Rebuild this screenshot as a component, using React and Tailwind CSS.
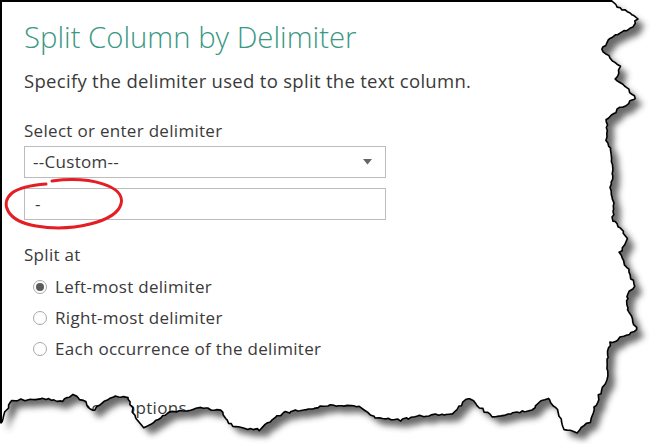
import React from 'react';

// key points of the torn edge, clockwise from the top right corner
const EDGE = [
  [612, 1], [620, 8], [637, 18], [633, 27], [610, 38], [602, 50], [610, 58], [620, 67],
  [615, 80], [625, 85], [636, 98], [618, 110], [607, 120], [607, 140], [612, 153],
  [613, 173], [610, 187], [613, 203], [613, 220], [628, 238], [620, 253], [628, 270],
  [635, 287], [627, 293], [628, 310], [637, 330], [610, 343], [607, 360], [608, 380],
  [600, 393], [590, 422], [577, 432], [565, 430], [557, 410], [548, 398], [540, 402],
  [533, 410], [513, 413], [493, 417], [480, 407], [468, 398], [460, 407], [453, 414],
  [420, 416], [400, 420], [373, 417], [360, 407], [333, 405], [300, 410], [283, 413],
  [267, 423], [260, 430], [233, 427], [220, 411], [200, 407], [187, 410], [167, 413],
  [153, 423], [143, 428], [137, 420], [127, 397], [113, 397], [107, 400], [93, 411],
  [83, 400], [73, 395], [60, 402], [43, 398], [33, 400], [12, 400], [5, 413], [1, 423],
];

// add small jagged steps between the key points
const jagged = () => {
  let seed = 7;
  const rnd = () => {
    seed = (seed * 9301 + 49297) % 233280;
    return seed / 233280 - 0.5;
  };
  const pts = [];
  for (let i = 0; i < EDGE.length - 1; i++) {
    const [x1, y1] = EDGE[i];
    const [x2, y2] = EDGE[i + 1];
    const steps = Math.max(1, Math.round(Math.hypot(x2 - x1, y2 - y1) / 3));
    for (let s = 0; s < steps; s++) {
      const t = s / steps;
      const j = i === 0 && s === 0 ? 0 : 1;
      pts.push([x1 + (x2 - x1) * t + rnd() * 2.2 * j, y1 + (y2 - y1) * t + rnd() * 2.2 * j]);
    }
  }
  pts.push(EDGE[EDGE.length - 1]);
  return pts.map(([x, y]) => `${x.toFixed(1)},${y.toFixed(1)}`).join(' L');
};

const edge = jagged();
const paper = `M1,1 L${edge} Z`;
const outside = `M612,0 L${edge} L0,444 L653,444 L653,0 Z`;

const TornEdge = () => (
  <svg className="absolute inset-0 pointer-events-none" width="653" height="444" viewBox="0 0 653 444">
    <defs>
      <filter id="blur" x="-10%" y="-10%" width="120%" height="120%">
        <feGaussianBlur stdDeviation="3.2" />
      </filter>
      <clipPath id="out">
        <path d={outside} />
      </clipPath>
    </defs>
    <path d={outside} fill="#fff" />
    <g clipPath="url(#out)">
      <path d={paper} fill="#444" opacity="0.8" filter="url(#blur)" transform="translate(7,7)" />
    </g>
    <path d={paper} fill="none" stroke="#000" strokeWidth="1.6" strokeLinejoin="round" />
    <path d="M0,1 L612,1 M1,0 L1,423" stroke="#000" strokeWidth="2" />
  </svg>
);

const Radio = ({ checked, label }) => (
  <label className="flex items-center gap-[8px] h-[31px]">
    <span className="w-[14px] h-[14px] rounded-full border border-[#a8a8a8] bg-white flex items-center justify-center">
      {checked && <span className="w-[8px] h-[8px] rounded-full bg-[#5a5a5a]" />}
    </span>
    <span>{label}</span>
  </label>
);

export default function App() {
  return (
    <div
      className="relative w-[653px] h-[444px] overflow-hidden bg-white text-[#3a3a3a]"
      style={{ fontFamily: '"Open Sans", "Noto Sans", sans-serif' }}
    >
      <div className="pl-6 pt-[19px]">
        <h1 className="text-[29.3px] leading-[36px] font-light text-[#3a9884]">
          Split Column by Delimiter
        </h1>
        <p className="mt-[14px] text-[18.5px] leading-[24px] tracking-[0.3px]">
          Specify the delimiter used to split the text column.
        </p>
        <p className="mt-[27px] text-[17px] leading-[22px] tracking-[0.3px]">Select or enter delimiter</p>
        <div className="mt-[4px] w-[362px] h-[32px] border border-[#bcbcbc] flex items-center justify-between pl-[8px] pr-[13px] text-[17px] tracking-[0.3px]">
          <span>--Custom--</span>
          <svg width="9" height="6" viewBox="0 0 9 6">
            <path d="M0,0 L9,0 L4.5,5.5 Z" fill="#666" />
          </svg>
        </div>
        <div className="mt-[10px] w-[362px] h-[32px] border border-[#bcbcbc] flex items-center pl-[10px] text-[17px]">
          -
        </div>
        <p className="mt-[24px] text-[17px] leading-[22px] tracking-[0.3px]">Split at</p>
        <div className="mt-[5px] pl-[9px] flex flex-col text-[17px] tracking-[0.3px]">
          <Radio checked label="Left-most delimiter" />
          <Radio label="Right-most delimiter" />
          <Radio label="Each occurrence of the delimiter" />
        </div>
        <div className="mt-[33px] h-[22px] flex items-center gap-[6px] text-[17px] tracking-[0.3px] pl-[2px]">
          <span className="text-[10px]">▷</span>
          <span>Advanced options</span>
        </div>
      </div>
      <TornEdge />
      <svg className="absolute left-0 top-0 pointer-events-none" width="140" height="240" viewBox="0 0 140 240">
        <path
          d="M52,181 C90,176 126,186 121,204 C116,222 72,232 36,226 C6,221 0,203 12,193 C20,187 32,185 46,184"
          fill="none"
          stroke="#e31e24"
          strokeWidth="3"
          strokeLinecap="round"
        />
      </svg>
    </div>
  );
}
